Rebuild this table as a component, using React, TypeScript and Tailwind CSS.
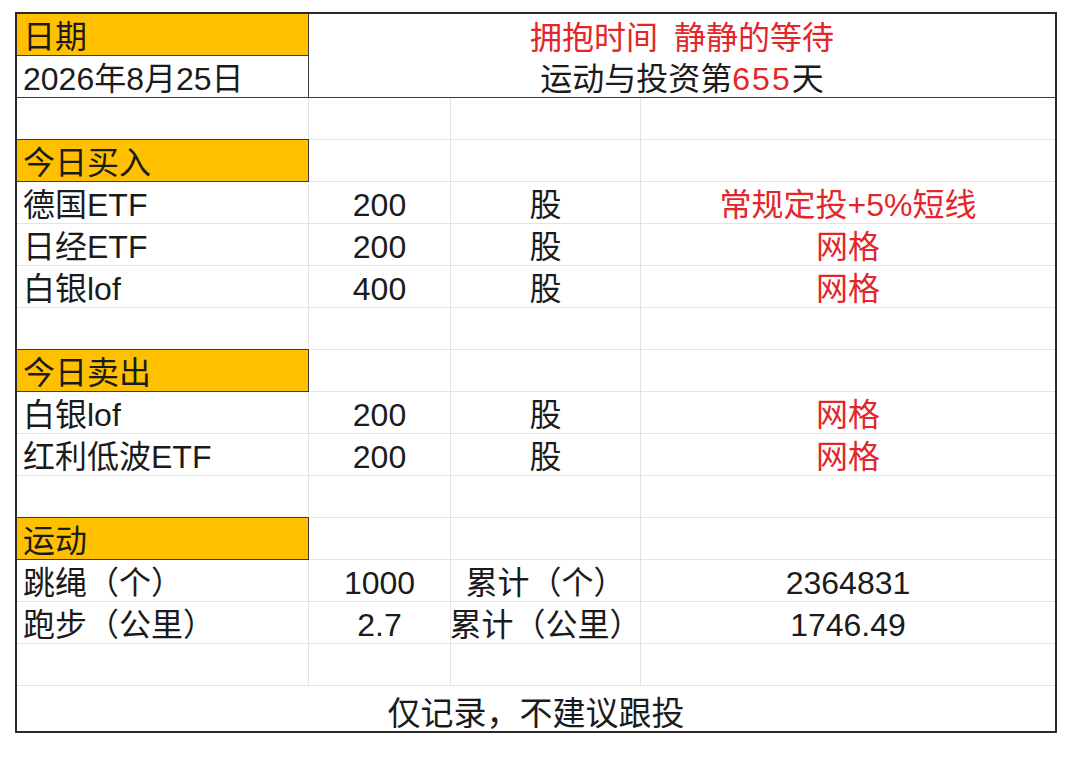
import React from "react";

type Row =
  | { kind: "blank" }
  | { kind: "head"; label: string }
  | { kind: "data"; name: string; qty: string; unit: string; note: string; red?: boolean };

const rows: Row[] = [
  { kind: "blank" },
  { kind: "head", label: "今日买入" },
  { kind: "data", name: "德国ETF", qty: "200", unit: "股", note: "常规定投+5%短线", red: true },
  { kind: "data", name: "日经ETF", qty: "200", unit: "股", note: "网格", red: true },
  { kind: "data", name: "白银lof", qty: "400", unit: "股", note: "网格", red: true },
  { kind: "blank" },
  { kind: "head", label: "今日卖出" },
  { kind: "data", name: "白银lof", qty: "200", unit: "股", note: "网格", red: true },
  { kind: "data", name: "红利低波ETF", qty: "200", unit: "股", note: "网格", red: true },
  { kind: "blank" },
  { kind: "head", label: "运动" },
  { kind: "data", name: "跳绳（个）", qty: "1000", unit: "累计（个）", note: "2364831" },
  { kind: "data", name: "跑步（公里）", qty: "2.7", unit: "累计（公里）", note: "1746.49" },
  { kind: "blank" },
];

const cell = "flex h-[42px] items-end pb-[2px] leading-none whitespace-nowrap border-b border-[#e3e3e3]";
const red = "text-[#e3262b]";

function DataRow({ row }: { row: Row }) {
  if (row.kind === "blank") {
    return (
      <>
        <div className={`${cell} border-r`} />
        <div className={`${cell} border-r`} />
        <div className={`${cell} border-r`} />
        <div className={cell} />
      </>
    );
  }
  if (row.kind === "head") {
    return (
      <>
        <div className="relative z-10 -mt-px flex h-[43px] items-end border border-l-0 border-[#3c3c3c] bg-[#ffc000] pb-[2px] pl-[6px] leading-none">
          {row.label}
        </div>
        <div className={`${cell} border-r`} />
        <div className={`${cell} border-r`} />
        <div className={cell} />
      </>
    );
  }
  return (
    <>
      <div className={`${cell} border-r pl-[6px]`}>{row.name}</div>
      <div className={`${cell} justify-center border-r`}>{row.qty}</div>
      <div className={`${cell} justify-center overflow-visible border-r`}>
        <span className="relative z-10 -ml-4 -mr-4">{row.unit}</span>
      </div>
      <div className={`${cell} justify-center ${row.red ? red : ""}`}>{row.note}</div>
    </>
  );
}

export default function App() {
  return (
    <div
      className="min-h-[760px] w-[1080px] bg-white pt-[12px] pl-[15px] text-[32px] text-[#1b1b1b]"
      style={{ fontFamily: '"Liberation Sans", "Noto Sans CJK SC", sans-serif' }}
    >
      <div className="w-[1042px] border-2 border-[#2a2a2a]">
        {/* top block: date on the left, merged title on the right */}
        <div className="flex border-b border-[#3c3c3c]">
          <div className="w-[292px] shrink-0 border-r border-[#3c3c3c]">
            <div className="flex h-[42px] items-end border-b border-[#3c3c3c] bg-[#ffc000] pb-[2px] pl-[6px] leading-none">
              日期
            </div>
            <div className="flex h-[41px] items-end pb-[2px] pl-[6px] leading-none">2026年8月25日</div>
          </div>
          <div className="flex flex-1 flex-col">
            <div className={`flex h-[42px] items-end justify-center pb-[2px] leading-none ${red}`}>
              拥抱时间<span className="inline-block w-[16px]" />静静的等待
            </div>
            <div className="flex h-[41px] items-end justify-center pb-[2px] leading-none">
              运动与投资第<span className={`${red} tracking-[2px]`}>655</span>天
            </div>
          </div>
        </div>

        <div className="grid grid-cols-[292px_142px_190px_1fr]">
          {rows.map((r, i) => (
            <DataRow key={i} row={r} />
          ))}
        </div>

        <div className="flex h-[45px] items-end justify-center pb-[1px] text-[33px] leading-none">仅记录，不建议跟投</div>
      </div>
    </div>
  );
}
